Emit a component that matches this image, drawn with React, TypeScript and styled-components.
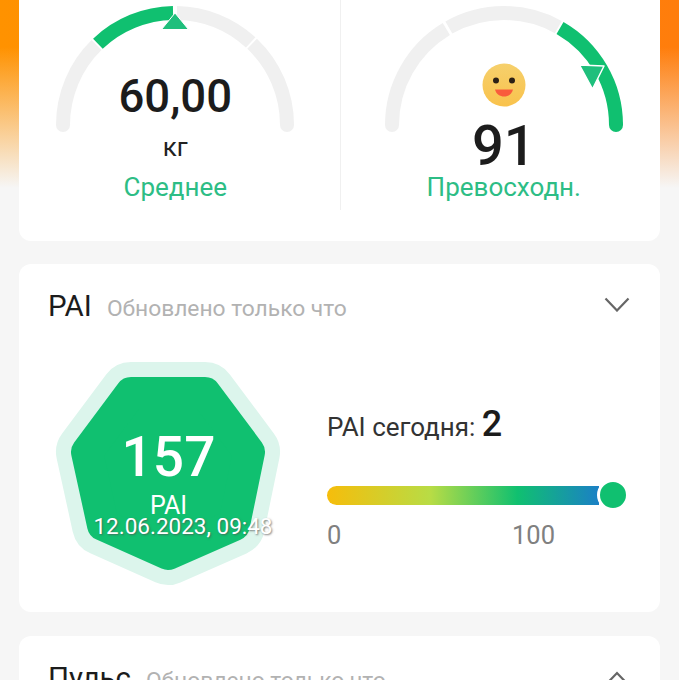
import styled, { createGlobalStyle } from "styled-components";

const GREEN = "#10c070";
const TRACK = "#f0f0f0";

const GlobalStyle = createGlobalStyle`
  html, body {
    margin: 0;
    padding: 0;
    background: #f6f6f6;
  }
  * {
    box-sizing: border-box;
  }
`;

// angles in degrees: 180 is the left end of the gauge, 0 the right end
function point(angle: number) {
  const rad = (angle * Math.PI) / 180;
  return { x: 120 + 112 * Math.cos(rad), y: 125 - 112 * Math.sin(rad) };
}

function Arc({ from, to, color }: { from: number; to: number; color: string }) {
  const a = point(from);
  const b = point(to);
  return (
    <path
      d={`M${a.x} ${a.y} A112 112 0 0 1 ${b.x} ${b.y}`}
      fill="none"
      stroke={color}
      strokeWidth={14}
    />
  );
}

function WeightGauge() {
  return (
    <GaugeSvg viewBox="0 0 240 140">
      <circle cx={8} cy={125} r={7} fill={TRACK} />
      <circle cx={232} cy={125} r={7} fill={TRACK} />
      <Arc from={180} to={134.5} color={TRACK} />
      <Arc from={133.5} to={91} color={GREEN} />
      <Arc from={89} to={47.5} color={TRACK} />
      <Arc from={46.5} to={0} color={TRACK} />
      <polygon
        points="120,13 106.5,29.5 133.5,29.5"
        fill="#1fbf7c"
        stroke="#fff"
        strokeWidth={1}
        strokeLinejoin="round"
      />
    </GaugeSvg>
  );
}

function ScoreGauge() {
  return (
    <GaugeSvg viewBox="0 0 240 140">
      <circle cx={8} cy={125} r={7} fill={TRACK} />
      <circle cx={232} cy={125} r={7} fill={GREEN} />
      <Arc from={180} to={121} color={TRACK} />
      <Arc from={119.5} to={61} color={TRACK} />
      <Arc from={60} to={0} color={GREEN} />
      <polygon
        points="195.5,65 220,66 208.5,89"
        fill="#1fbf7c"
        stroke="#fff"
        strokeWidth={1.5}
        strokeLinejoin="round"
      />
    </GaugeSvg>
  );
}

function Smiley() {
  return (
    <SmileySvg viewBox="0 0 44 44">
      <defs>
        <linearGradient id="face" x1="0" y1="0" x2="0" y2="1">
          <stop offset="0" stopColor="#f6d06c" />
          <stop offset="1" stopColor="#f9c24c" />
        </linearGradient>
      </defs>
      <circle cx={22} cy={22} r={21.5} fill="url(#face)" />
      <circle cx={14} cy={17.5} r={3} fill="#2c2015" />
      <circle cx={30} cy={17.5} r={3} fill="#2c2015" />
      <path d="M13 26.5 H31 C30 31 26 33.5 22 33.5 C18 33.5 14 31 13 26.5Z" fill="#f95c3c" />
    </SmileySvg>
  );
}

function PaiBadge() {
  const points = "131,393 205,393 249,452 234,525 168,554 103,525 87,452";
  return (
    <BadgeSvg viewBox="50 356 240 236">
      <polygon points={points} fill="#dcf5ec" stroke="#dcf5ec" strokeWidth={62} strokeLinejoin="round" />
      <polygon points={points} fill={GREEN} stroke={GREEN} strokeWidth={32} strokeLinejoin="round" />
    </BadgeSvg>
  );
}

function Chevron({ up }: { up?: boolean }) {
  return (
    <ChevronSvg viewBox="0 0 26 15" $up={up}>
      <path
        d={up ? "M1.5 14 L13 2 L24.5 14" : "M1.5 1.5 L13 13.5 L24.5 1.5"}
        fill="none"
        stroke="#666"
        strokeWidth={2.2}
      />
    </ChevronSvg>
  );
}

export default function App() {
  return (
    <>
      <GlobalStyle />
      <Page>
        <TopBand />
        <SummaryCard>
          <GaugeCell $shift="right">
            <GaugeBox>
              <WeightGauge />
              <BigValue>60,00</BigValue>
              <Unit>кг</Unit>
              <Status>Среднее</Status>
            </GaugeBox>
          </GaugeCell>
          <Divider />
          <GaugeCell $shift="left">
            <GaugeBox>
              <ScoreGauge />
              <Smiley />
              <Score>91</Score>
              <ScoreStatus>Превосходн.</ScoreStatus>
            </GaugeBox>
          </GaugeCell>
        </SummaryCard>

        <PaiCard>
          <CardHeader>
            <CardTitle>PAI</CardTitle>
            <Updated>Обновлено только что</Updated>
            <Chevron />
          </CardHeader>
          <PaiBody>
            <Badge>
              <PaiBadge />
              <BadgeValue>157</BadgeValue>
              <BadgeLabel>PAI</BadgeLabel>
              <BadgeDate>12.06.2023, 09:48</BadgeDate>
            </Badge>
            <TodayPanel>
              <TodayLine>
                PAI сегодня: <TodayValue>2</TodayValue>
              </TodayLine>
              <ScaleRow>
                <ScaleBar />
                <Knob />
              </ScaleRow>
              <ScaleLabels>
                <span>0</span>
                <span>100</span>
              </ScaleLabels>
            </TodayPanel>
          </PaiBody>
        </PaiCard>

        <PulseCard>
          <CardHeader>
            <CardTitle>Пульс</CardTitle>
            <Updated>Обновлено только что</Updated>
            <Chevron up />
          </CardHeader>
        </PulseCard>
      </Page>
    </>
  );
}

const Page = styled.div`
  position: relative;
  width: 679px;
  height: 680px;
  overflow: hidden;
  padding: 0 19px;
  display: flex;
  flex-direction: column;
  gap: 23px;
  background: #f6f6f6;
  font-family: Roboto, "Noto Sans", sans-serif;
`;

const TopBand = styled.div`
  position: absolute;
  top: 0;
  left: 0;
  right: 0;
  height: 188px;
  background: linear-gradient(to bottom, rgba(246, 246, 246, 0) 25%, #f6f6f6 100%),
    linear-gradient(to right, #ff9200, #ff7d0c);
`;

const Card = styled.section`
  position: relative;
  flex: none;
  background: #fff;
  border-radius: 12px;
`;

const SummaryCard = styled(Card)`
  height: 241px;
  border-radius: 0 0 12px 12px;
  display: flex;
  align-items: flex-start;
`;

const GaugeCell = styled.div<{ $shift: "left" | "right" }>`
  flex: 1;
  padding-left: ${(p) => (p.$shift === "left" ? "7px" : "0")};
  padding-right: ${(p) => (p.$shift === "right" ? "8px" : "0")};
`;

const Divider = styled.div`
  flex: none;
  width: 1px;
  height: 210px;
  background: #f0f0f0;
`;

const GaugeBox = styled.div`
  position: relative;
  width: 240px;
  height: 210px;
  margin: 0 auto;
  display: flex;
  flex-direction: column;
  align-items: center;
`;

const GaugeSvg = styled.svg`
  position: absolute;
  top: 0;
  left: 0;
  width: 240px;
  height: 140px;
`;

const BigValue = styled.div`
  margin-top: 70px;
  font-size: 45.5px;
  line-height: 54px;
  font-weight: 500;
  color: #1c1c1c;
`;

const Unit = styled.div`
  margin-top: 7px;
  font-size: 26px;
  line-height: 32px;
  color: #222;
`;

const Status = styled.div`
  margin-top: 8px;
  font-size: 26px;
  line-height: 32px;
  color: #2dbd85;
  white-space: nowrap;
`;

const SmileySvg = styled.svg`
  margin-top: 63px;
  width: 44px;
  height: 44px;
  flex: none;
  position: relative;
`;

const Score = styled.div`
  margin-top: 14px;
  font-size: 56px;
  line-height: 50px;
  font-weight: 500;
  color: #1c1c1c;
`;

const ScoreStatus = styled(Status)`
  margin-top: 0;
`;

const PaiCard = styled(Card)`
  height: 348px;
`;

const PulseCard = styled(Card)`
  height: 200px;
  margin-top: 1px;
`;

const CardHeader = styled.header`
  display: flex;
  align-items: baseline;
  padding: 25px 30px 0 29px;
`;

const CardTitle = styled.span`
  font-size: 29.5px;
  line-height: 34px;
  color: #1c1c1c;
`;

const Updated = styled.span`
  margin-left: 15px;
  font-size: 22.8px;
  line-height: 34px;
  color: #b2b2b2;
`;

const ChevronSvg = styled.svg<{ $up?: boolean }>`
  width: 26px;
  height: 15px;
  margin-left: auto;
  align-self: center;
  position: relative;
  top: ${(p) => (p.$up ? "-1px" : "-3px")};
`;

const PaiBody = styled.div`
  display: flex;
  align-items: flex-start;
  padding: 30px 33px 0 31px;
`;

const Badge = styled.div`
  position: relative;
  flex: none;
  width: 240px;
  height: 236px;
  display: flex;
  flex-direction: column;
  align-items: center;
`;

const BadgeSvg = styled.svg`
  position: absolute;
  top: 0;
  left: 0;
  width: 240px;
  height: 236px;
`;

const BadgeValue = styled.div`
  position: relative;
  margin-left: -3px;
  margin-top: 69px;
  font-size: 55px;
  line-height: 64px;
  font-weight: 500;
  color: #fff;
`;

const BadgeLabel = styled.div`
  position: relative;
  margin-left: -3px;
  margin-top: 4px;
  font-size: 25px;
  line-height: 26px;
  color: #fff;
`;

const BadgeDate = styled.div`
  position: relative;
  margin-left: 26px;
  margin-top: -6px;
  font-size: 22.5px;
  line-height: 26px;
  white-space: nowrap;
  color: #fff;
  text-shadow: 1px 1px 2px rgba(80, 80, 80, 0.7);
`;

const TodayPanel = styled.div`
  flex: 1;
  margin-left: 37px;
  padding-top: 46px;
`;

const TodayLine = styled.div`
  font-size: 26px;
  line-height: 44px;
  color: #333;
  white-space: nowrap;
`;

const TodayValue = styled.span`
  font-size: 36px;
  font-weight: 500;
  color: #1c1c1c;
`;

const ScaleRow = styled.div`
  display: flex;
  align-items: center;
  margin-top: 30px;
`;

const ScaleBar = styled.div`
  width: 272px;
  height: 19px;
  border-radius: 10px 0 0 10px;
  background: linear-gradient(to right, #f6bd0b 0%, #b8dc45 38%, #10c070 70%, #1b80c6 100%);
`;

const Knob = styled.div`
  flex: none;
  width: 32px;
  height: 32px;
  margin-left: -2px;
  border-radius: 50%;
  border: 3px solid #fff;
  background: ${GREEN};
  position: relative;
`;

const ScaleLabels = styled.div`
  display: flex;
  justify-content: space-between;
  width: 228px;
  margin-top: 9px;
  font-size: 25.5px;
  line-height: 30px;
  color: #808080;
`;
